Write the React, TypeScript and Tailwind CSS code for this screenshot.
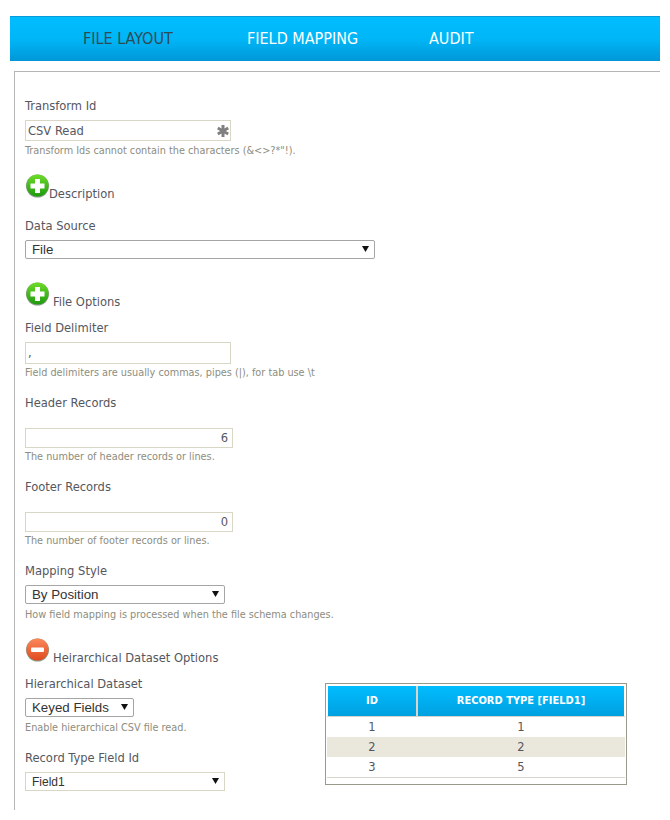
import { useId } from 'react';

const font = '[font-family:"DejaVu_Sans_Condensed","DejaVu_Sans",sans-serif] font-stretch-condensed';

function RoundIcon({ kind }: { kind: 'plus' | 'minus' }) {
  const id = useId();
  const top = kind === 'plus' ? '#6fdc2a' : '#fb8a5c';
  const bottom = kind === 'plus' ? '#1c9a0e' : '#e0481e';
  return (
    <svg width="23" height="24" viewBox="0 0 23 24" className="shrink-0">
      <defs>
        <linearGradient id={id} x1="0" y1="0" x2="0" y2="1">
          <stop offset="0" stopColor={top} />
          <stop offset="1" stopColor={bottom} />
        </linearGradient>
      </defs>
      <circle cx="11.5" cy="12" r="11.5" fill="#8a9a88" />
      <circle cx="11.5" cy="11.5" r="11" fill={`url(#${id})`} />
      {kind === 'plus' ? (
        <path d="M9 5h5v4.5h4.5v5H14V19H9v-4.5H4.500v-5H9z" fill="#fff" />
      ) : (
        <rect x="5" y="9.5" width="13" height="4.500" rx="1" fill="#fff" />
      )}
    </svg>
  );
}

function Label({ children, className = '' }: { children: string; className?: string }) {
  return <div className={`h-5 text-[12.8px] leading-5 text-[#555760] ${className}`}>{children}</div>;
}

function Help({ children, className = '' }: { children: string; className?: string }) {
  return <div className={`h-4 text-[10.8px] leading-[18px] text-[#8d8d80] ${className}`}>{children}</div>;
}

function TextBox({ value, className = '' }: { value: string; className?: string }) {
  return (
    <div className={`border border-[#d8d6c4] bg-white text-[12.8px] text-[#555760] flex items-center ${className}`}>
      {value}
    </div>
  );
}

function Select({ value, plain = false, className = '' }: { value: string; plain?: boolean; className?: string }) {
  const look = plain
    ? 'border-[#d8d6c4] text-xs'
    : 'rounded-[2px] border-[#a5a5a5] text-[13.3px]';
  return (
    <div className={`h-[19px] flex items-center justify-between border bg-white pl-[6px] pr-[5px] [font-family:"Liberation_Sans",sans-serif] text-[#333] ${look} ${className}`}>
      <span>{value}</span>
      <svg width="7" height="6" viewBox="0 0 7 6" className="mb-[2px]"><path d="M0 0h7L3.500 6z" fill="#111" /></svg>
    </div>
  );
}

function Section({ kind, title, textClass = '' }: { kind: 'plus' | 'minus'; title: string; textClass?: string }) {
  return (
    <div className="flex h-6 items-end pl-px">
      <RoundIcon kind={kind} />
      <span className={`-mb-[4px] text-[12.8px] leading-4 text-[#555760] ${textClass}`}>{title}</span>
    </div>
  );
}

const rows = [
  ['1', '1'],
  ['2', '2'],
  ['3', '5'],
];

export default function App() {
  return (
    <div className={`w-[670px] h-[820px] bg-white pt-4 overflow-hidden ${font}`}>
      {/* Tabs */}
      <nav className="ml-[10px] w-[650px] h-[45px] flex items-center border-t border-[#0a9ad6] bg-gradient-to-b from-[#00bdff] via-[#00b6f7] to-[#0097d8] pl-[73px] text-base text-white">
        <span className="w-[164px] text-[#2e4a52]">FILE LAYOUT</span>
        <span className="w-[182px]">FIELD MAPPING</span>
        <span>AUDIT</span>
      </nav>

      {/* Form panel */}
      <main className="ml-[14px] mt-[10px] w-[646px] h-[739px] border-l border-t border-[#b5b5b5] pl-[10px] pt-[24px]">
        <Label>Transform Id</Label>
        <div className="mt-[4px] relative w-[206px]">
          <TextBox value="CSV Read" className="h-[21px] pl-[2px]" />
          <svg width="12" height="12" viewBox="0 0 12 12" className="absolute right-[2px] top-[5px]">
            <path d="M6 0v12M0.800 3l10.400 6M0.800 9l10.400-6" stroke="#808080" strokeWidth="3" />
          </svg>
        </div>
        <Help className="mt-px">Transform Ids cannot contain the characters (&amp;&lt;&gt;?*"!).</Help>

        <div className="mt-[16px]"><Section kind="plus" title="Description" /></div>
        <Label className="mt-[18px]">Data Source</Label>
        <Select value="File" className="mt-[4px] w-[350px]" />

        <div className="mt-[23px]"><Section kind="plus" title="File Options" textClass="ml-1" /></div>
        <Label className="mt-[12px]">Field Delimiter</Label>
        <TextBox value="," className="mt-[4px] h-[22px] w-[206px] pl-[2px]" />
        <Help>Field delimiters are usually commas, pipes (|), for tab use \t</Help>

        <Label className="mt-[13px]">Header Records</Label>
        <TextBox value="6" className="mt-[15px] h-[20px] w-[208px] justify-end pr-[4px]" />
        <Help>The number of header records or lines.</Help>

        <Label className="mt-[13px]">Footer Records</Label>
        <TextBox value="0" className="mt-[15px] h-[20px] w-[208px] justify-end pr-[4px]" />
        <Help>The number of footer records or lines.</Help>

        <Label className="mt-[13px]">Mapping Style</Label>
        <Select value="By Position" className="mt-[4px] w-[200px]" />
        <Help className="mt-[2px]">How field mapping is processed when the file schema changes.</Help>

        <div className="mt-[16px]"><Section kind="minus" title="Heirarchical Dataset Options" textClass="ml-1" /></div>

        <div className="mt-[12px] flex">
          <div className="w-[300px]">
            <Label>Hierarchical Dataset</Label>
            <Select value="Keyed Fields" className="mt-[4px] w-[109px]" />
            <Help className="mt-[2px]">Enable hierarchical CSV file read.</Help>
            <Label className="mt-[13px]">Record Type Field Id</Label>
            <Select value="Field1" plain className="mt-[4px] w-[200px]" />
          </div>

          {/* Preview table */}
          <div className="mt-[9px] h-[102px] w-[302px] border border-[#9a9a8c] p-[1px] pt-[2px]">
            <div className="mx-px flex h-[30px] gap-[2px] bg-[#d8d6cc] text-[11px] font-bold text-white">
              <div className="w-[88px] pt-px flex items-center justify-center bg-gradient-to-b from-[#00bdff] to-[#00a0e0]">ID</div>
              <div className="flex-1 pt-px flex items-center justify-center bg-gradient-to-b from-[#00bdff] to-[#00a0e0]">RECORD TYPE [FIELD1]</div>
            </div>
            <div className="border-t border-b border-[#d8d6cc] text-[12.8px] text-[#555760]">
              {rows.map(([id, type], i) => (
                <div key={id} className={`flex h-[20px] items-center ${i === 1 ? 'bg-[#eae8dc]' : 'bg-white'}`}>
                  <div className="w-[90px] text-center">{id}</div>
                  <div className="flex-1 text-center">{type}</div>
                </div>
              ))}
            </div>
          </div>
        </div>
      </main>
    </div>
  );
}
